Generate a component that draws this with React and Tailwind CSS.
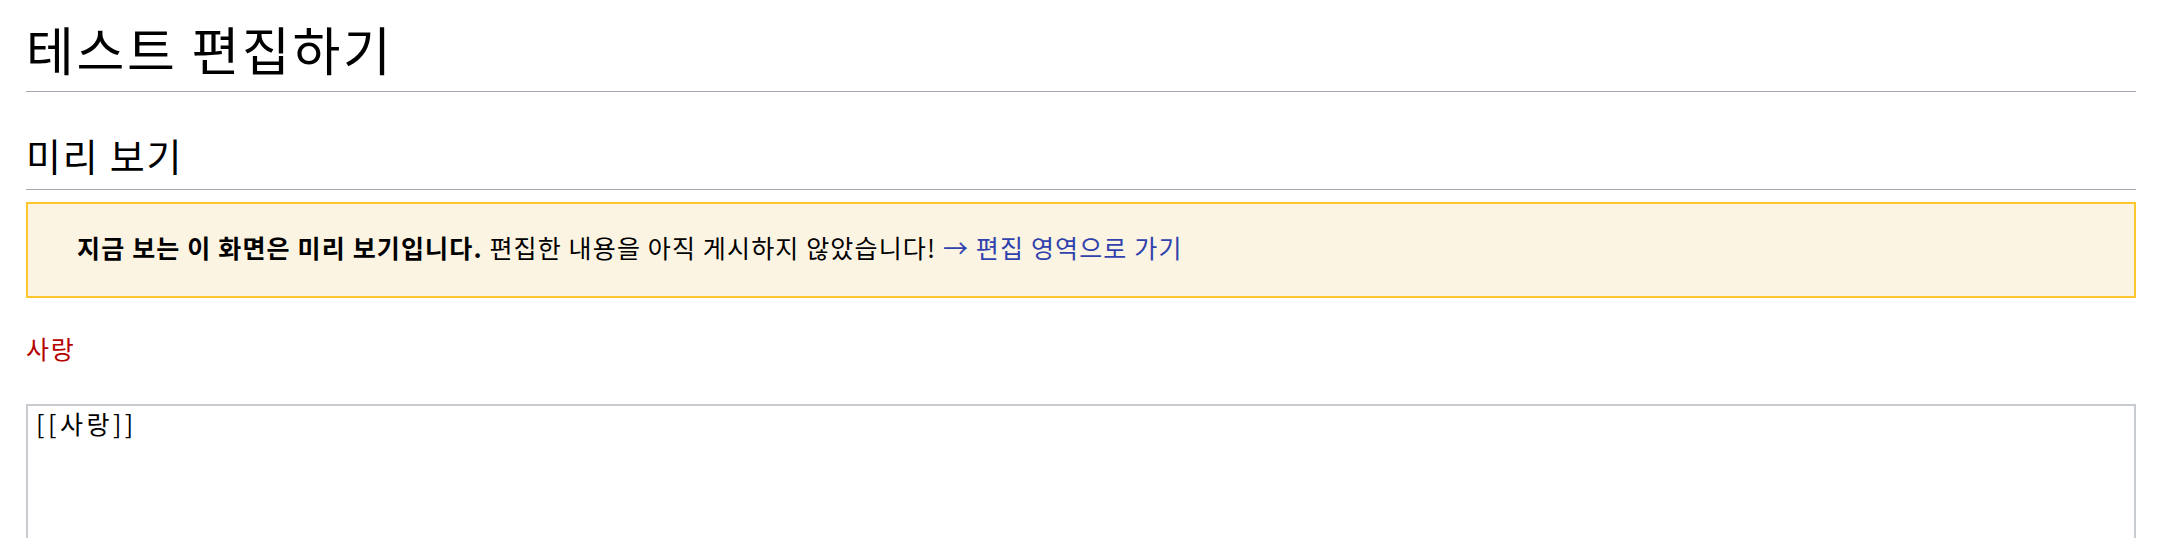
import React from "react";

const App = () => {
  return (
    <div
      className="min-h-screen bg-white px-[26px] text-black"
      style={{ fontFamily: '"Noto Sans CJK KR", "Noto Sans", sans-serif' }}
    >
      {/* Page title */}
      <h1 className="text-[52px] leading-[60px] tracking-[2.6px] font-normal pt-[19px] pb-[12px] border-b border-[#a2a9b1]">
        테스트 편집하기
      </h1>

      {/* Preview heading */}
      <h2 className="mt-[40px] text-[38px] leading-[45px] tracking-[1.8px] font-normal pb-[12px] border-b border-[#a2a9b1]">
        미리 보기
      </h2>

      {/* Preview notice */}
      <div className="mt-[12px] border-2 border-[#fcc62d] bg-[#fbf4e2] pt-[25px] pb-[31px] pl-[49px] pr-6 text-[25px] leading-[36px] tracking-[1.15px]">
        <span className="font-bold">지금 보는 이 화면은 미리 보기입니다.</span>{" "}
        편집한 내용을 아직 게시하지 않았습니다!{" "}
        <a href="#editform" className="text-[#3042ad]">
          → 편집 영역으로 가기
        </a>
      </div>

      {/* Preview content */}
      <p className="mt-[32px] text-[25px] leading-[36px] tracking-[1.8px]">
        <a href="#" className="text-[#b50000]">
          사랑
        </a>
      </p>

      {/* Edit area */}
      <textarea
        className="mt-[38px] block w-full h-[300px] resize-none border-2 border-[#c8ccd1] px-[8px] py-0 text-[25px] leading-[34px] tracking-[3.5px] outline-none"
        style={{ fontFamily: '"Noto Sans CJK KR", "Noto Sans", sans-serif' }}
        defaultValue="[[사랑]]"
      />
    </div>
  );
};

export default App;
